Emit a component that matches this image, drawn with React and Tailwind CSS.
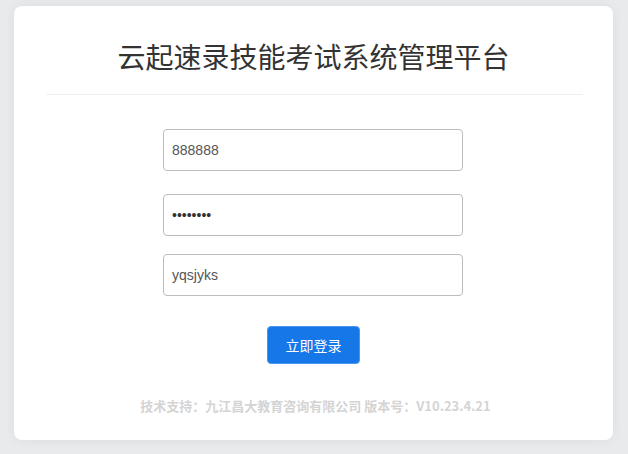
import React, { useState } from "react";

const cjk = { fontFamily: '"Noto Sans CJK SC", "Liberation Sans", sans-serif' };
const latin = { fontFamily: '"Liberation Sans", Arial, sans-serif' };

const App = () => {
  const [account, setAccount] = useState("888888");
  const [password, setPassword] = useState("12345678");
  const [code, setCode] = useState("yqsjyks");

  return (
    <div className="min-h-screen w-full bg-[#e9eaec] pt-[6px] pl-[14px] pr-[15px] pb-[14px]" style={cjk}>
      <div className="w-[599px] h-[434px] bg-white rounded-[8px] shadow-[0_0_12px_rgba(0,0,0,0.06)] flex flex-col items-center">
        {/* Title */}
        <h1 className="mt-[30px] h-[40px] leading-[40px] text-[28px] text-[#333]">
          云起速录技能考试系统管理平台
        </h1>
        <div className="mt-[18px] w-[537px] ml-[2px] h-px bg-[#f0f0f0]" />

        {/* Form */}
        <div className="mt-[34px] flex flex-col items-center">
          <input
            value={account}
            onChange={(e) => setAccount(e.target.value)}
            className="w-[300px] -ml-px h-[42px] rounded-[4px] border border-[#bcbcbc] px-[8px] text-[14px] text-[#555] outline-none"
            style={latin}
          />
          <input
            type="password"
            value={password}
            onChange={(e) => setPassword(e.target.value)}
            className="mt-[23px] w-[300px] -ml-px h-[42px] rounded-[4px] border border-[#bcbcbc] px-[8px] text-[14px] text-[#333] outline-none"
            style={latin}
          />
          <input
            value={code}
            onChange={(e) => setCode(e.target.value)}
            className="mt-[18px] w-[300px] -ml-px h-[42px] rounded-[4px] border border-[#bcbcbc] px-[8px] text-[14px] text-[#555] outline-none"
            style={latin}
          />
          <button className="mt-[30px] w-[93px] h-[38px] rounded-[4px] bg-[#1677e8] border border-[#4a95ee] text-white text-[14px]">
            立即登录
          </button>
        </div>

        {/* Footer */}
        <p className="mt-[32px] ml-[4px] text-[13px] font-bold text-[#d4d4d4]">
          技术支持：九江昌大教育咨询有限公司 版本号：V10.23.4.21
        </p>
      </div>
    </div>
  );
};

export default App;
